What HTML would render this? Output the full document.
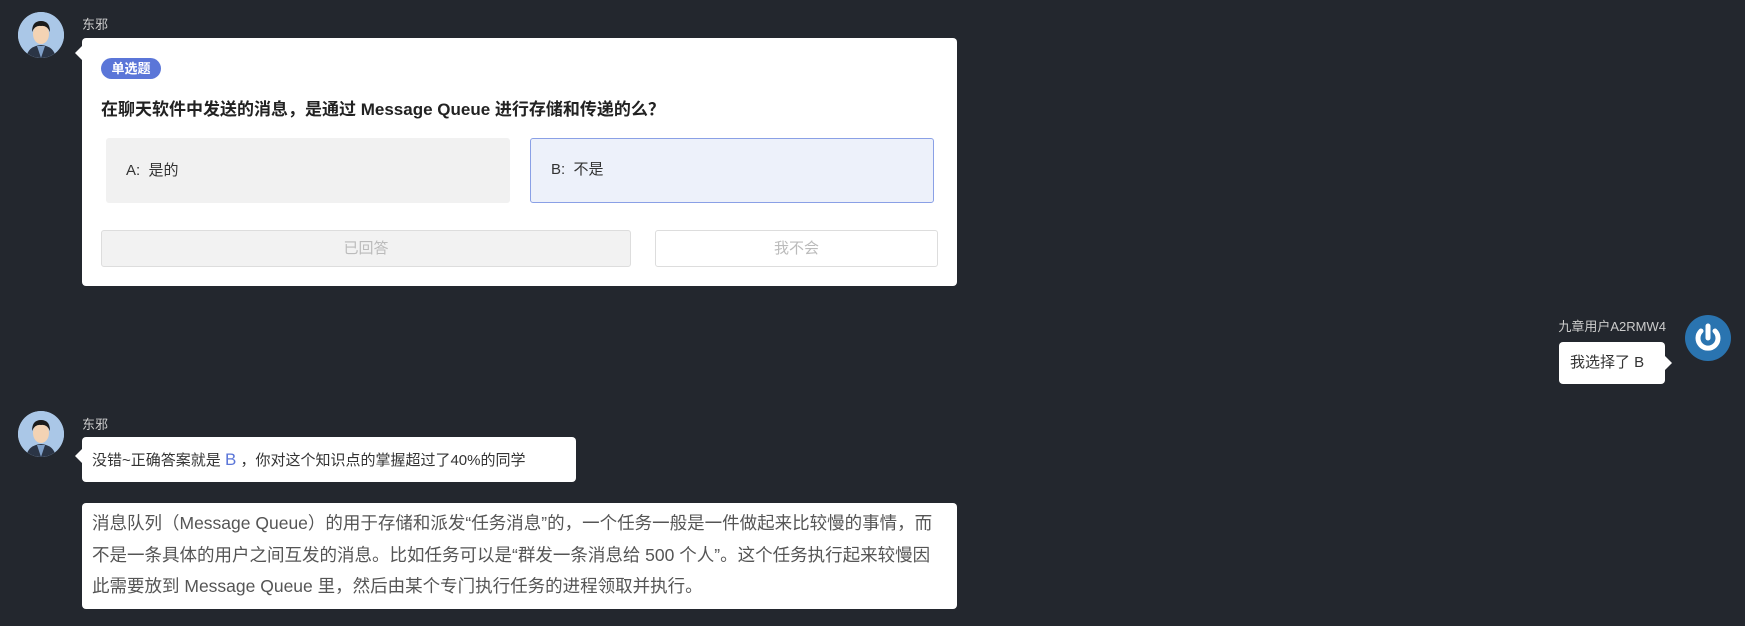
<!DOCTYPE html>
<html><head><meta charset="utf-8"><style>
*{box-sizing:border-box;margin:0;padding:0}
body{width:1745px;height:626px;background:#23272e;font-family:"Liberation Sans","Noto Sans CJK SC",sans-serif;position:relative;overflow:hidden;color:#333}
.abs{position:absolute}
.name{color:#ccc;font-size:13px}
.av{width:46px;height:46px;border-radius:50%;background:#a9c6e6;overflow:hidden}
.card{background:#fff;border-radius:4px}
.tri{position:absolute;width:0;height:0;border-top:7px solid transparent;border-bottom:7px solid transparent}
</style></head><body>
<div class="abs av" style="left:18px;top:12px"><svg width="46" height="46" viewBox="0 0 46 46"><rect width="46" height="46" fill="#aac7e7"/><path d="M8 46 Q10 34 23 33 Q36 34 38 46Z" fill="#2b3546"/><path d="M19 34 L23 46 L27 34Z" fill="#7fa0c9"/><ellipse cx="23" cy="22" rx="8" ry="10" fill="#f3d3b4"/><path d="M14 20 Q14 9 23 9 Q32 9 32 20 Q29 13 23 14 Q17 13 14 20Z" fill="#1b1b1b"/></svg></div>
<div class="abs name" style="left:82px;top:14px">东邪</div>
<div class="abs card" style="left:82px;top:38px;width:875px;height:248px">
<div class="tri" style="left:-7px;top:8px;border-right:7px solid #fff"></div>
<div class="abs" style="left:19px;top:20px;width:60px;height:21px;border-radius:11px;background:#5b76d8;color:#fff;font-size:13px;font-weight:bold;text-align:center;line-height:21px">单选题</div>
<div class="abs" style="left:19px;top:57px;font-size:17px;font-weight:bold;color:#222">在聊天软件中发送的消息，是通过 Message Queue 进行存储和传递的么？</div>
<div class="abs" style="left:24px;top:100px;width:404px;height:65px;background:#f1f1f1;border-radius:3px;font-size:15px;line-height:65px;padding-left:20px">A:&nbsp; 是的</div>
<div class="abs" style="left:448px;top:100px;width:404px;height:65px;background:#edf1fa;border:1.5px solid #8aa0e6;border-radius:3px;font-size:15px;line-height:62px;padding-left:20px">B:&nbsp; 不是</div>
<div class="abs" style="left:19px;top:192px;width:530px;height:37px;background:#f2f2f2;border:1px solid #ddd;border-radius:3px;font-size:15px;color:#bbb;text-align:center;line-height:35px">已回答</div>
<div class="abs" style="left:573px;top:192px;width:283px;height:37px;background:#fff;border:1px solid #ddd;border-radius:3px;font-size:15px;color:#bbb;text-align:center;line-height:35px">我不会</div>
</div>
<div class="abs name" style="left:1549px;top:316px;width:117px;text-align:right">九章用户A2RMW4</div>
<div class="abs" style="left:1685px;top:315px;width:46px;height:46px;border-radius:50%;background:#2a74b0"><svg width="46" height="46" viewBox="0 0 46 46"><path d="M16 16 A10 10 0 1 0 30 16" fill="none" stroke="#fff" stroke-width="5" stroke-linecap="round"/><line x1="23" y1="11" x2="23" y2="23" stroke="#fff" stroke-width="5" stroke-linecap="round"/></svg></div>
<div class="abs card" style="left:1559px;top:342px;width:106px;height:42px;font-size:15px;line-height:42px;padding-left:11px">我选择了 B
<div class="tri" style="right:-7px;top:14px;border-left:7px solid #fff"></div></div>
<div class="abs av" style="left:18px;top:411px"><svg width="46" height="46" viewBox="0 0 46 46"><rect width="46" height="46" fill="#aac7e7"/><path d="M8 46 Q10 34 23 33 Q36 34 38 46Z" fill="#2b3546"/><path d="M19 34 L23 46 L27 34Z" fill="#7fa0c9"/><ellipse cx="23" cy="22" rx="8" ry="10" fill="#f3d3b4"/><path d="M14 20 Q14 9 23 9 Q32 9 32 20 Q29 13 23 14 Q17 13 14 20Z" fill="#1b1b1b"/></svg></div>
<div class="abs name" style="left:82px;top:414px">东邪</div>
<div class="abs card" style="left:82px;top:437px;width:494px;height:45px;font-size:15px;line-height:45px;padding-left:10px">没错~正确答案就是 <span style="color:#5b76d8;font-size:17px">B</span> ，你对这个知识点的掌握超过了40%的同学
<div class="tri" style="left:-7px;top:12px;border-right:7px solid #fff"></div></div>
<div class="abs card" style="left:82px;top:503px;width:875px;height:106px;font-size:17.5px;line-height:31.5px;padding:5px 10px;color:#555">消息队列（Message Queue）的用于存储和派发“任务消息”的，一个任务一般是一件做起来比较慢的事情，而不是一条具体的用户之间互发的消息。比如任务可以是“群发一条消息给 500 个人”。这个任务执行起来较慢因此需要放到 Message Queue 里，然后由某个专门执行任务的进程领取并执行。</div>
</body></html>
